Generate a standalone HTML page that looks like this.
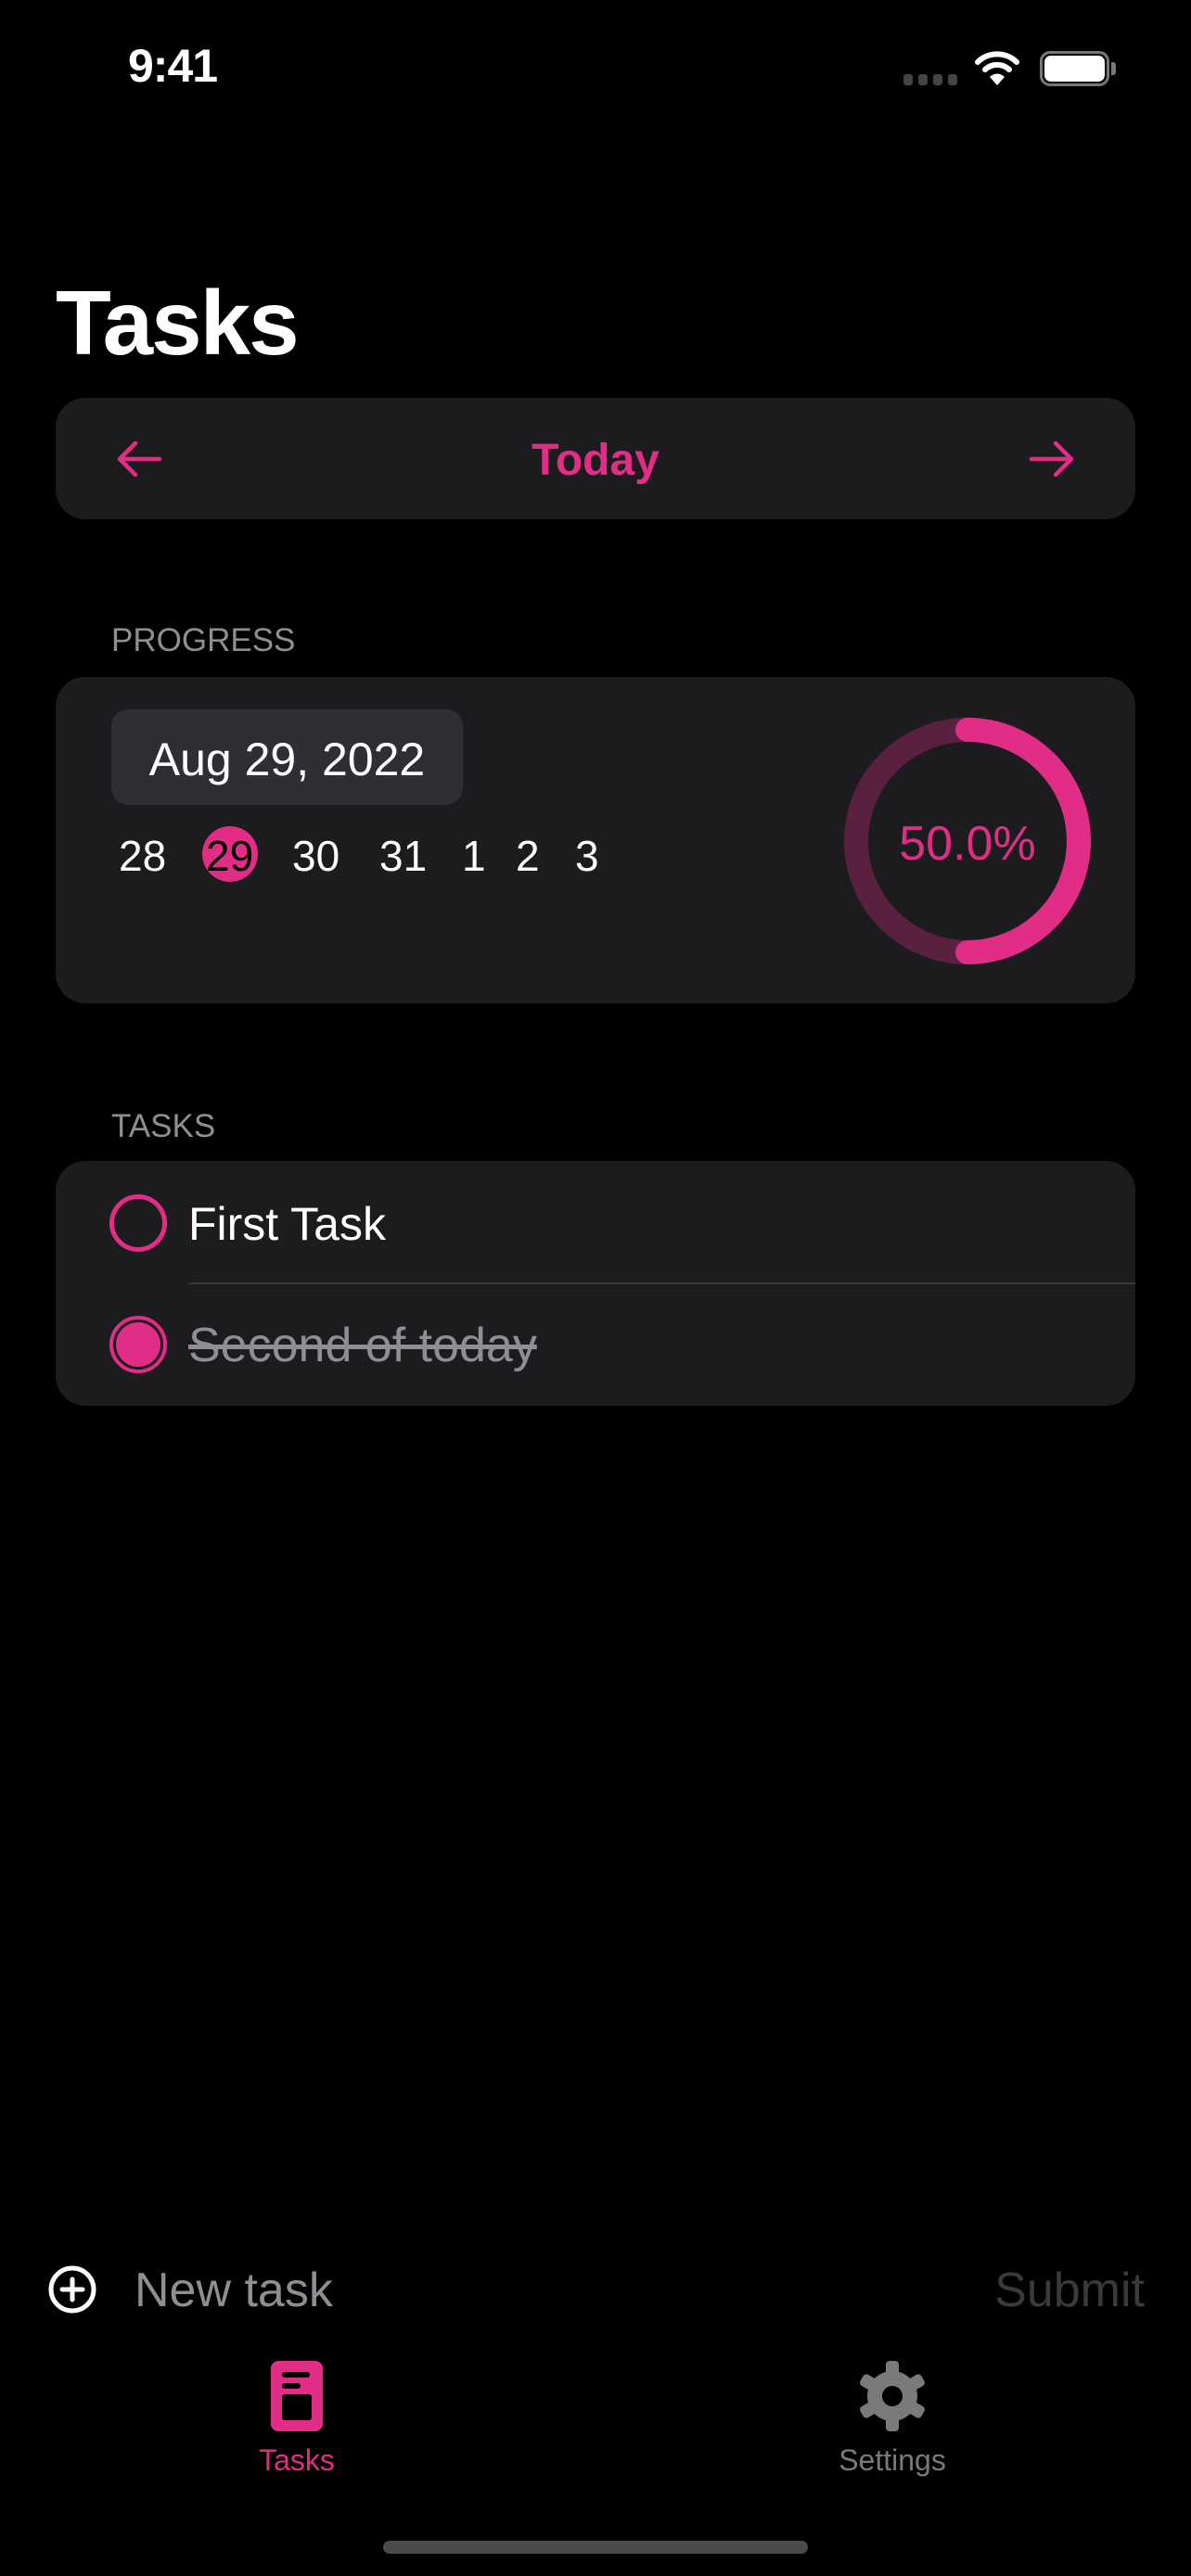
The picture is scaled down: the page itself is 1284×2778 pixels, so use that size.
<!DOCTYPE html>
<html><head><meta charset="utf-8"><style>
*{margin:0;padding:0;box-sizing:border-box}
body{width:1284px;height:2778px;background:#000;position:relative;overflow:hidden;font-family:"Liberation Sans",sans-serif;color:#fff}
.a{position:absolute;white-space:nowrap}
.card{position:absolute;left:60px;width:1164px;background:#1c1c1e;border-radius:32px}
.pink{color:#e22d87}
</style></head><body>
<div class="a" style="left:138px;top:42px;font-size:50px;font-weight:bold;letter-spacing:-1px">9:41</div>
<div class="a" style="left:974px;top:80px;width:10px;height:12px;background:#444;border-radius:3px"></div>
<div class="a" style="left:990px;top:80px;width:10px;height:12px;background:#444;border-radius:3px"></div>
<div class="a" style="left:1006px;top:80px;width:10px;height:12px;background:#444;border-radius:3px"></div>
<div class="a" style="left:1022px;top:80px;width:10px;height:12px;background:#444;border-radius:3px"></div>
<svg class="a" style="left:1050px;top:52px" width="50" height="42" viewBox="0 0 50 42"><path d="M4 15 A30 30 0 0 1 46 15" stroke="#fff" stroke-width="6" fill="none" stroke-linecap="round"/><path d="M12 23 A19 19 0 0 1 38 23" stroke="#fff" stroke-width="6" fill="none" stroke-linecap="round"/><path d="M25 40 L17 31 A11 11 0 0 1 33 31 Z" fill="#fff"/></svg>
<div class="a" style="left:1121px;top:55px;width:75px;height:38px;border:3px solid #777;border-radius:11px"></div>
<div class="a" style="left:1126px;top:60px;width:65px;height:28px;background:#fff;border-radius:7px"></div>
<div class="a" style="left:1198px;top:67px;width:5px;height:14px;background:#777;border-radius:0 3px 3px 0"></div>

<div class="a" style="left:60px;top:292px;font-size:98px;font-weight:bold;letter-spacing:-2px">Tasks</div>

<div class="card" style="top:429px;height:131px"></div>
<svg class="a" style="left:120px;top:470px" width="60" height="50" viewBox="0 0 60 50"><path d="M52 25 H10 M26 8 L9 25 L26 42" stroke="#e22d87" stroke-width="4.5" fill="none" stroke-linecap="round" stroke-linejoin="round"/></svg>
<svg class="a" style="left:1104px;top:470px" width="60" height="50" viewBox="0 0 60 50"><path d="M8 25 H50 M34 8 L51 25 L34 42" stroke="#e22d87" stroke-width="4.5" fill="none" stroke-linecap="round" stroke-linejoin="round"/></svg>
<div class="a pink" style="left:0;width:1284px;text-align:center;top:469px;font-size:48px;font-weight:bold">Today</div>

<div class="a" style="left:120px;top:671px;font-size:35px;color:#8e8e93">PROGRESS</div>
<div class="card" style="top:730px;height:352px"></div>
<div class="a" style="left:120px;top:765px;width:379px;height:103px;background:#2f2f33;border-radius:18px"></div>
<div class="a" style="left:120px;width:379px;text-align:center;top:790px;font-size:50px">Aug 29, 2022</div>
<div class="a" style="left:218px;top:891px;width:60px;height:60px;border-radius:50%;background:#e22d87"></div>
<div class="a" style="left:0;top:896px;font-size:46px;width:1284px">
<span class="a" style="left:128px">28</span><span class="a" style="left:222px;color:#000">29</span><span class="a" style="left:315px">30</span><span class="a" style="left:409px">31</span><span class="a" style="left:498px">1</span><span class="a" style="left:556px">2</span><span class="a" style="left:620px">3</span></div>
<svg class="a" style="left:903px;top:767px" width="280" height="280" viewBox="0 0 280 280"><circle cx="140" cy="140" r="120" stroke="#5a2040" stroke-width="26" fill="none"/><path d="M140 20 A120 120 0 0 1 140 260" stroke="#e22d87" stroke-width="26" fill="none" stroke-linecap="round"/></svg>
<div class="a pink" style="left:903px;width:280px;text-align:center;top:880px;font-size:52px">50.0%</div>

<div class="a" style="left:120px;top:1195px;font-size:35px;color:#8e8e93">TASKS</div>
<div class="card" style="top:1252px;height:264px"></div>
<div class="a" style="left:118px;top:1288px;width:62px;height:62px;border:5px solid #e22d87;border-radius:50%"></div>
<div class="a" style="left:203px;top:1291px;font-size:50px">First Task</div>
<div class="a" style="left:204px;top:1383px;width:1020px;height:2px;background:#38383a"></div>
<div class="a" style="left:118px;top:1419px;width:62px;height:62px;border:4px solid #e22d87;border-radius:50%"></div>
<div class="a" style="left:125px;top:1426px;width:48px;height:48px;background:#e22d87;border-radius:50%"></div>
<div class="a" style="left:203px;top:1421px;font-size:52px;color:#8e8e93;text-decoration:line-through">Second of today</div>

<svg class="a" style="left:52px;top:2443px" width="52" height="52" viewBox="0 0 52 52"><circle cx="26" cy="26" r="23" stroke="#fff" stroke-width="5" fill="none"/><path d="M26 15 V37 M15 26 H37" stroke="#fff" stroke-width="5" stroke-linecap="round"/></svg>
<div class="a" style="left:145px;top:2440px;font-size:52px;color:#8e8e93">New task</div>
<div class="a" style="right:50px;top:2440px;font-size:52px;color:#3a3a3c">Submit</div>

<svg class="a" style="left:292px;top:2546px" width="56" height="76" viewBox="0 0 56 76"><rect x="0" y="0" width="56" height="76" rx="8" fill="#e22d87"/><rect x="12" y="36" width="32" height="28" rx="3" fill="#000"/><rect x="12" y="12" width="30" height="6" rx="3" fill="#000"/><rect x="12" y="24" width="20" height="6" rx="3" fill="#000"/></svg>
<div class="a pink" style="left:220px;width:200px;text-align:center;top:2635px;font-size:32px">Tasks</div>
<svg class="a" style="left:925px;top:2546px" width="74" height="76" viewBox="-37 -38 74 76"><g fill="#7a7a7a"><circle r="27"/><g id="t"><rect x="-7" y="-38" width="14" height="16" rx="4"/></g><use href="#t" transform="rotate(60)"/><use href="#t" transform="rotate(120)"/><use href="#t" transform="rotate(180)"/><use href="#t" transform="rotate(240)"/><use href="#t" transform="rotate(300)"/></g><circle r="11" fill="#000"/></svg>
<div class="a" style="left:862px;width:200px;text-align:center;top:2635px;font-size:32px;color:#7a7a7a">Settings</div>

<div class="a" style="left:413px;top:2740px;width:458px;height:14px;background:#4b4b4b;border-radius:7px"></div>
</body></html>
